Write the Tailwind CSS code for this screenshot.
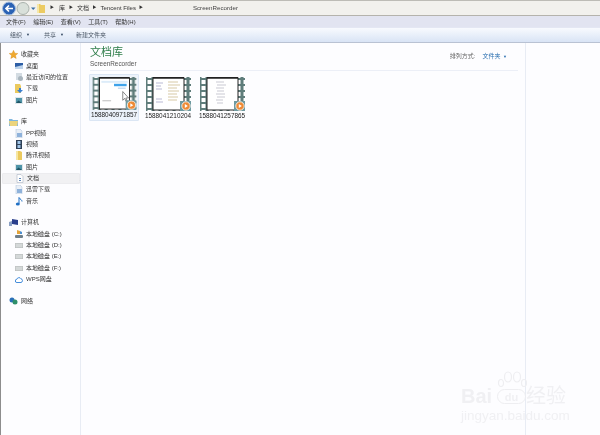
<!DOCTYPE html>
<html lang="zh">
<head>
  <meta charset="UTF-8" />
  <title>ScreenRecorder</title>
  <script src="https://cdn.jsdelivr.net/npm/@tailwindcss/browser@4"></script>
</head>
<body class="w-[600px] h-[435px] overflow-hidden bg-white relative font-['Liberation_Sans','Noto_Sans_CJK_SC',sans-serif] text-[6px] text-[#222]">
<div class="blur-[0.3px]">

  <!-- address bar -->
  <div class="h-[16px] flex items-center bg-[#f2f1ed] border-t border-t-[#bdbcb6] border-b border-b-[#b5b3ac] whitespace-nowrap">
    <div class="w-[37px] pl-[1px] shrink-0 flex">
      <svg width="36" height="15" viewBox="0 0 36 15">
        <circle cx="8" cy="7.500" r="6.500" fill="#2b62b4" stroke="#a9c0e0" />
        <path d="M12 7.500H5M8 4.500 5 7.500l3 3" fill="none" stroke="#fff" stroke-width="1.700" />
        <circle cx="22" cy="7.500" r="6" fill="#d9e0da" stroke="#a9b1ac" />
        <path d="M30 6.500h4.500L32.200 9z" fill="#3a6ea5" />
      </svg>
    </div>
    <div class="h-[13px] flex items-center text-[#333] shrink-0">
      <svg width="8" height="11" viewBox="0 0 8 11"><path d="M0 1h3l1 1h4v8H0z" fill="#eccb62" /><path d="M0 1h2v9H0z" fill="#f6e7a6" /></svg>
      <span class="ml-[5px] text-[4px]">▶</span><span class="ml-[5px]">库</span>
      <span class="ml-[4px] text-[4px]">▶</span><span class="ml-[4px]">文档</span>
      <span class="ml-[3.500px] text-[4px]">▶</span><span class="ml-[4px]">Tencent Files</span>
      <span class="ml-[3px] text-[4px]">▶</span>
    </div>
    <span class="ml-[50px] text-[#444] text-[6.200px]">ScreenRecorder</span>
  </div>

  <!-- menu bar -->
  <div class="h-[12px] flex items-center gap-[7.500px] pl-[6px] bg-[#e2e4f1] border-b border-[#e4e7f3] text-[#333] pt-[1px]">
    <span>文件(F)</span><span>编辑(E)</span><span>查看(V)</span><span>工具(T)</span><span>帮助(H)</span>
  </div>

  <!-- toolbar -->
  <div class="h-[15px] flex items-center pl-[10px] bg-gradient-to-b from-[#f8fafe] to-[#d9e4f5] border-b border-[#b9c2d3] text-[#4a5665]">
    <span>组织</span><span class="ml-[4px] text-[4px] text-[#30445f]">▼</span>
    <span class="ml-[14px]">共享</span><span class="ml-[4px] text-[4px] text-[#30445f]">▼</span>
    <span class="ml-[12px]">新建文件夹</span>
  </div>

  <div class="flex h-[392px]">
    <!-- nav pane -->
    <div class="w-[81px] shrink-0 pt-[6px] border-l border-l-[#8d8d8d] border-r border-r-[#e8ecf4] bg-[#fdfdff] text-[#333]">
      <div class="h-[11.400px] flex items-center gap-[3px] pl-[8px]">
        <svg width="9" height="9" viewBox="0 0 9 9"><path d="M4.500.3 5.800 3.200l3 .3-2.300 2 .7 3-2.700-1.600L1.800 8.500l.7-3-2.300-2 3-.3z" fill="#f0a92e" stroke="#d58a1c" stroke-width=".4" /></svg>
        <span>收藏夹</span>
      </div>
      <div class="h-[11.400px] flex items-center gap-[3px] pl-[14px]">
        <svg width="8" height="8" viewBox="0 0 8 8"><rect y="1" width="8" height="6" fill="#2d5ea6" /><path d="M0 5l8-2v4H0z" fill="#bcd2ea" /></svg>
        <span>桌面</span>
      </div>
      <div class="h-[11.400px] flex items-center gap-[3px] pl-[14px]">
        <svg width="8" height="8" viewBox="0 0 8 8"><rect x="1" width="6" height="7" fill="#d3dbe2" /><circle cx="5.500" cy="5.500" r="2.500" fill="#a8b4bd" /></svg>
        <span>最近访问的位置</span>
      </div>
      <div class="h-[11.400px] flex items-center gap-[3px] pl-[14px]">
        <svg width="8" height="9" viewBox="0 0 8 9"><path d="M0 0h5l1 2v7H0z" fill="#ebc95e" /><path d="M4 4h2v2h2L5 9 2 6h2z" fill="#3a7fd0" /></svg>
        <span>下载</span>
      </div>
      <div class="h-[11.400px] flex items-center gap-[3px] pl-[14px]">
        <svg width="8" height="7" viewBox="0 0 8 7"><rect width="8" height="7" fill="#dfe6ea" /><rect x="1" y="1" width="6" height="5" fill="#4f94a8" /><path d="M1 6l2.500-2.500L7 6z" fill="#1f5566" /></svg>
        <span>图片</span>
      </div>

      <div class="h-[11.400px] flex items-center gap-[3px] pl-[8px] mt-[10px]">
        <svg width="9" height="8" viewBox="0 0 9 8"><path d="M0 1h3l1 1h5v6H0z" fill="#7fb6de" /><path d="M0 3h9l-1 5H1z" fill="#ecd47c" /></svg>
        <span>库</span>
      </div>
      <div class="h-[11.400px] flex items-center gap-[3px] pl-[14px]">
        <svg width="8" height="9" viewBox="0 0 8 9"><path d="M1 0h4l2 2v7H1z" fill="#e9eff7" stroke="#a9bcd4" stroke-width=".5" /><rect x="2" y="4" width="5" height="4" fill="#8fb2db" /></svg>
        <span>PP视频</span>
      </div>
      <div class="h-[11.400px] flex items-center gap-[3px] pl-[14px]">
        <svg width="8" height="9" viewBox="0 0 8 9"><rect x="1" width="6" height="9" fill="#2f4056" /><rect x="2.500" y="1" width="3" height="3" fill="#9fc4e8" /><rect x="2.500" y="5" width="3" height="3" fill="#9fc4e8" /></svg>
        <span>视频</span>
      </div>
      <div class="h-[11.400px] flex items-center gap-[3px] pl-[14px]">
        <svg width="8" height="9" viewBox="0 0 8 9"><path d="M1 0h4l2 1v8H1z" fill="#ebc95e" /><path d="M1 0h2v9H1z" fill="#f6e6a2" /></svg>
        <span>腾讯视频</span>
      </div>
      <div class="h-[11.400px] flex items-center gap-[3px] pl-[14px]">
        <svg width="8" height="7" viewBox="0 0 8 7"><rect width="8" height="7" fill="#dfe6ea" /><rect x="1" y="1" width="6" height="5" fill="#4f94a8" /><path d="M1 6l2.500-2.500L7 6z" fill="#1f5566" /></svg>
        <span>图片</span>
      </div>
      <div class="h-[11.400px] flex items-center gap-[3px] pl-[13px] ml-[1px] w-[78px] bg-[#f1f1f3] border border-[#ececef] rounded-[1px]">
        <svg width="8" height="9" viewBox="0 0 8 9"><path d="M1 .5h4l2 2v6H1z" fill="#fff" stroke="#a9b4c4" stroke-width=".6" /><path d="M3 4h2v1H3zM3 6h2v1H3z" fill="#5d86b8" /></svg>
        <span>文档</span>
      </div>
      <div class="h-[11.400px] flex items-center gap-[3px] pl-[14px]">
        <svg width="8" height="9" viewBox="0 0 8 9"><path d="M1 0h4l2 2v7H1z" fill="#e9eff7" stroke="#a9bcd4" stroke-width=".5" /><rect x="2" y="4" width="5" height="4" fill="#8fb2db" /></svg>
        <span>迅雷下载</span>
      </div>
      <div class="h-[11.400px] flex items-center gap-[3px] pl-[14px]">
        <svg width="8" height="9" viewBox="0 0 8 9"><path d="M4 .5v6" stroke="#1f6fc4" stroke-width="1" /><ellipse cx="2.800" cy="7" rx="2" ry="1.600" fill="#1f6fc4" /><path d="M4 .5c1 2 3 2 3 4" fill="none" stroke="#1f6fc4" /></svg>
        <span>音乐</span>
      </div>

      <div class="h-[11.400px] flex items-center gap-[3px] pl-[8px] mt-[10px]">
        <svg width="9" height="8" viewBox="0 0 9 8"><path d="M3 0l6 1v5L3 5z" fill="#2a3f8c" /><path d="M0 3l3-1v5H0z" fill="#8aa0c4" /></svg>
        <span>计算机</span>
      </div>
      <div class="h-[11.400px] flex items-center gap-[3px] pl-[14px]">
        <svg width="8" height="8" viewBox="0 0 8 8"><path d="M2 0l3 1v3H2z" fill="#e3a43a" /><path d="M5 1l2 1v2H5z" fill="#4c8fd0" /><rect y="5" width="8" height="3" rx="1" fill="#6f7f8a" /></svg>
        <span>本地磁盘 (C:)</span>
      </div>
      <div class="h-[11.400px] flex items-center gap-[3px] pl-[14px]">
        <svg width="8" height="5" viewBox="0 0 8 5"><rect width="8" height="5" rx="1.500" fill="#d4d8d8" stroke="#8f9595" stroke-width=".5" /></svg>
        <span>本地磁盘 (D:)</span>
      </div>
      <div class="h-[11.400px] flex items-center gap-[3px] pl-[14px]">
        <svg width="8" height="5" viewBox="0 0 8 5"><rect width="8" height="5" rx="1.500" fill="#d4d8d8" stroke="#8f9595" stroke-width=".5" /></svg>
        <span>本地磁盘 (E:)</span>
      </div>
      <div class="h-[11.400px] flex items-center gap-[3px] pl-[14px]">
        <svg width="8" height="5" viewBox="0 0 8 5"><rect width="8" height="5" rx="1.500" fill="#d4d8d8" stroke="#8f9595" stroke-width=".5" /></svg>
        <span>本地磁盘 (F:)</span>
      </div>
      <div class="h-[11.400px] flex items-center gap-[3px] pl-[14px]">
        <svg width="8" height="7" viewBox="0 0 8 7"><path d="M2 6.500a1.600 1.600 0 0 1-.2-3.200A2.300 2.300 0 0 1 6 2.800a1.900 1.900 0 0 1 0 3.700z" fill="#fff" stroke="#2f7fd6" stroke-width=".9" /></svg>
        <span>WPS网盘</span>
      </div>

      <div class="h-[11.400px] flex items-center gap-[3px] pl-[8px] mt-[10px]">
        <svg width="9" height="8" viewBox="0 0 9 8"><circle cx="3" cy="3" r="2.500" fill="#2a6fb8" /><circle cx="6" cy="5" r="2.500" fill="#2f8f6a" /></svg>
        <span>网络</span>
      </div>
    </div>

    <!-- main -->
    <div class="w-[444px] shrink-0 bg-[#fdfdff] pl-[9px] pr-[7px] pt-[3px]">
      <div class="flex justify-between h-[25px] border-b border-[#eceff7]">
        <div>
          <div class="text-[11px] leading-[13px] text-[#2e7d4a]">文档库</div>
          <div class="text-[6.400px] leading-[9px] text-[#555]">ScreenRecorder</div>
        </div>
        <div class="flex items-center gap-[7px] h-[20px] pr-[11px]">
          <span class="text-[#666]">排列方式:</span>
          <span class="text-[#2a6fb0]">文件夹<span class="text-[4px] ml-[2.500px]">▼</span></span>
        </div>
      </div>
      <div class="flex gap-[4px] mt-[3px] -ml-[1px]">
        <div class="w-[50px] h-[47px] flex flex-col items-center pt-[2px] bg-[#edf3fb] border border-[#dbe6f4] rounded-[1px]">
          <svg width="45" height="34" viewBox="0 0 45 34">
            <defs>
              <pattern id="holes" width="7" height="6" patternUnits="userSpaceOnUse" y="2"><rect width="7" height="6" fill="#5f7d7b" /><rect x="1.500" y="1" width="4" height="4" rx=".5" fill="#fff" /></pattern>
            </defs>
            <rect width="45" height="34" fill="url(#holes)" />
            <rect x="7" y="1" width="31" height="32" fill="#fff" stroke="#222" />
            <rect x="7" y="0" width="31" height="1.500" fill="#222" />
            <rect x="9" y="4" width="27" height="2" fill="#dcecf9" />
            <rect x="22" y="7" width="13" height="2.500" fill="#3fa3ea" />
            <rect x="26" y="11" width="8" height="1" fill="#a9c9e8" />
            <rect x="10" y="24" width="9" height="1" fill="#bbb" />
            <path d="M31 15v9l2-2 1.300 3 1.200-.6-1.300-2.800H37z" fill="#fff" stroke="#555" stroke-width=".7" />
            <rect x="34" y="24" width="11" height="10" fill="#6f9aa0" />
            <circle cx="40" cy="29" r="4.200" fill="#ee8b36" stroke="#fff" stroke-width=".8" />
            <path d="M38.800 27v4l3-2z" fill="#fff" />
          </svg>
          <span class="text-[6.400px] leading-[10px] text-[#222]">1588040971857</span>
        </div>
        <div class="w-[50px] h-[47px] flex flex-col items-center pt-[3px]">
          <svg width="45" height="34" viewBox="0 0 45 34">
            <rect width="45" height="34" fill="url(#holes)" />
            <rect x="7" y="1" width="31" height="32" fill="#fff" stroke="#222" />
            <rect x="7" y="0" width="31" height="1.500" fill="#222" />
            <path d="M10 6h7M10 9h5M10 12h6M10 22h6M10 25h7" stroke="#b9b9d4" />
            <path d="M22 5h10M22 8h12M22 11h9M22 14h11M22 17h9M22 20h10M22 23h9" stroke="#d7c9a6" />
            <rect x="34" y="24" width="11" height="10" fill="#6f9aa0" />
            <circle cx="40" cy="29" r="4.200" fill="#ee8b36" stroke="#fff" stroke-width=".8" />
            <path d="M38.800 27v4l3-2z" fill="#fff" />
          </svg>
          <span class="text-[6.400px] leading-[10px] text-[#222]">1588041210204</span>
        </div>
        <div class="w-[50px] h-[47px] flex flex-col items-center pt-[3px]">
          <svg width="45" height="34" viewBox="0 0 45 34">
            <rect width="45" height="34" fill="url(#holes)" />
            <rect x="7" y="1" width="31" height="32" fill="#fff" stroke="#222" />
            <rect x="7" y="0" width="31" height="1.500" fill="#222" />
            <path d="M16 5h8M17 8h9M16 11h8M17 14h7M16 17h9M17 20h8M16 23h7M17 26h6" stroke="#c9c9d2" />
            <rect x="34" y="24" width="11" height="10" fill="#6f9aa0" />
            <circle cx="40" cy="29" r="4.200" fill="#ee8b36" stroke="#fff" stroke-width=".8" />
            <path d="M38.800 27v4l3-2z" fill="#fff" />
          </svg>
          <span class="text-[6.400px] leading-[10px] text-[#222]">1588041257865</span>
        </div>
      </div>
    </div>

    <!-- details pane -->
    <div class="flex-1 bg-[#fdfdff] border-l border-[#e8ecf4]"></div>
  </div>

  <!-- watermark -->
  <div class="absolute left-[461px] top-[370px] w-[106px] text-[#f0f0f3] leading-none whitespace-nowrap">
    <svg class="ml-[36px]" width="32" height="20" viewBox="0 0 32 20" fill="none" stroke="#eeeef1" stroke-width="1.200">
      <ellipse cx="11" cy="7" rx="3.500" ry="5" />
      <ellipse cx="20" cy="7" rx="3.500" ry="5" />
      <ellipse cx="4" cy="13" rx="2.500" ry="3.500" />
      <ellipse cx="27" cy="13" rx="2.500" ry="3.500" />
    </svg>
    <div class="flex items-center -mt-[4px] text-[20px] font-bold">
      <span class="w-[36px]">Bai</span>
      <span class="w-[29px] h-[15px] text-[11px] text-center leading-[14px] border border-[#eeeef1] rounded-full">du</span>
      <span class="text-[20px] font-normal">经验</span>
    </div>
    <div class="text-[13.500px] mt-[3px]">jingyan.baidu.com</div>
  </div>
</div>
</body>
</html>
